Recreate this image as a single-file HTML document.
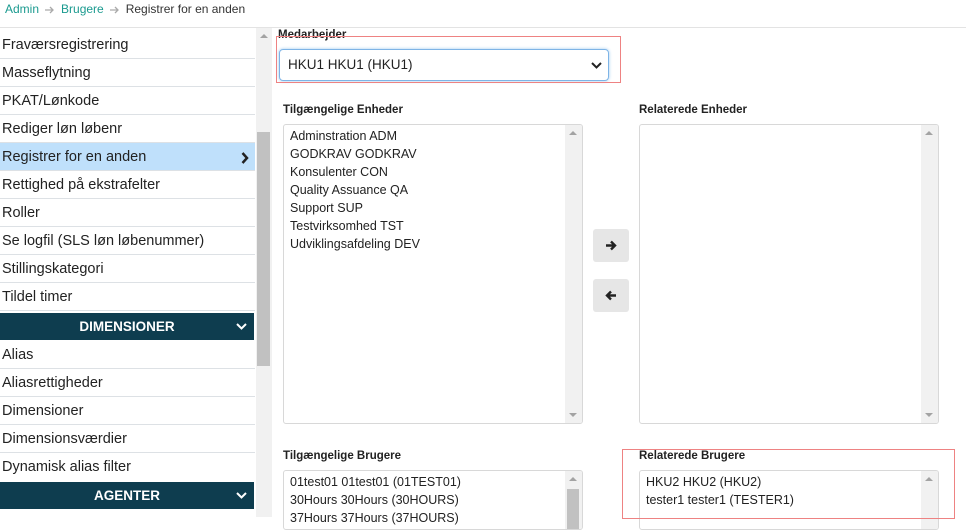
<!DOCTYPE html>
<html><head><style>
*{box-sizing:border-box;margin:0;padding:0}
body{width:966px;height:517px;overflow:hidden;background:#fff;font-family:"Liberation Sans",sans-serif;position:relative;color:#222}
.a{position:absolute}
.bc{top:2px;left:5px;font-size:12px;line-height:14px;color:#333}
.bc .g{color:#1a9a8f}
.bc svg{margin:0 6px;vertical-align:middle}
.row{position:absolute;left:0;width:255px;height:28px;border-bottom:1px solid #dde1e5;font-size:14.5px;line-height:29px;padding-left:2px;color:#222}
.hdr{position:absolute;left:0;width:254px;height:27px;background:#0e3d4f;color:#fff;font-weight:bold;font-size:13.5px;text-align:center;line-height:27px}
.hdr svg{position:absolute;right:7px;top:10px}
.lbl{position:absolute;font-size:11.5px;font-weight:bold;color:#222}
.box{position:absolute;border:1px solid #d8d8d8;border-radius:3px;background:#fff;overflow:hidden;font-size:12.5px;line-height:18px;padding:2px 6px;color:#222}
.sb{position:absolute;right:0;top:0;bottom:0;width:17px;background:#f1f1f1}
.up,.dn{position:absolute;left:4px;width:0;height:0;border-left:4px solid transparent;border-right:4px solid transparent}
.up{top:6px;border-bottom:4px solid #a3a3a3}
.dn{bottom:6px;border-top:4px solid #a3a3a3}
.btn{position:absolute;left:593px;width:36px;height:33px;background:#e6e6e6;border-radius:3px}
.btn svg{position:absolute;left:12px;top:11px}
.red{position:absolute;border:1.5px solid #ee8282}
</style></head><body>
<div class="a bc"><span class="g">Admin</span><svg width="10" height="8" viewBox="0 0 10 8"><path d="M0 4H8M5 1L8 4L5 7" stroke="#aaa" stroke-width="1.3" fill="none"/></svg><span class="g">Brugere</span><svg width="10" height="8" viewBox="0 0 10 8"><path d="M0 4H8M5 1L8 4L5 7" stroke="#aaa" stroke-width="1.3" fill="none"/></svg>Registrer for en anden</div>
<div class="a" style="top:27px;left:0;width:966px;height:1px;background:#e3e3e3"></div>

<div class="row" style="top:31px">Fraværsregistrering</div>
<div class="row" style="top:59px">Masseflytning</div>
<div class="row" style="top:87px">PKAT/Lønkode</div>
<div class="row" style="top:115px">Rediger løn løbenr</div>
<div class="row" style="top:143px;background:#bfe0fb">Registrer for en anden<svg style="position:absolute;right:6px;top:9px" width="8" height="12" viewBox="0 0 8 12"><path d="M1.5 1L6 6L1.5 11" stroke="#222" stroke-width="2.5" fill="none"/></svg></div>
<div class="row" style="top:171px">Rettighed på ekstrafelter</div>
<div class="row" style="top:199px">Roller</div>
<div class="row" style="top:227px">Se logfil (SLS løn løbenummer)</div>
<div class="row" style="top:255px">Stillingskategori</div>
<div class="row" style="top:283px">Tildel timer</div>
<div class="hdr" style="top:313px">DIMENSIONER<svg width="11" height="7" viewBox="0 0 11 7"><path d="M1 1L5.5 5.5L10 1" stroke="#fff" stroke-width="2" fill="none"/></svg></div>
<div class="row" style="top:341px">Alias</div>
<div class="row" style="top:369px">Aliasrettigheder</div>
<div class="row" style="top:397px">Dimensioner</div>
<div class="row" style="top:425px">Dimensionsværdier</div>
<div class="row" style="top:453px;border-bottom:none">Dynamisk alias filter</div>
<div class="hdr" style="top:482px">AGENTER<svg width="11" height="7" viewBox="0 0 11 7"><path d="M1 1L5.5 5.5L10 1" stroke="#fff" stroke-width="2" fill="none"/></svg></div>

<div class="a" style="left:256px;top:28px;width:16px;height:489px;background:#f1f1f1"></div>
<div class="a" style="left:257px;top:132px;width:13px;height:234px;background:#c1c1c1"></div>
<div class="up" style="left:260px;top:34px"></div>

<div class="lbl" style="left:278px;top:29px">Medarbejder</div>
<div class="a" style="left:279px;top:49px;width:330px;height:32px;border:1px solid #7eb4e6;border-radius:4px;box-shadow:0 0 3px #9cc8f0;font-size:13.5px;line-height:30px;padding-left:8px">HKU1 HKU1 (HKU1)<svg style="position:absolute;right:6px;top:12px" width="11" height="7" viewBox="0 0 11 7"><path d="M1 1L5.5 5.5L10 1" stroke="#222" stroke-width="2" fill="none"/></svg></div>
<div class="red" style="left:276px;top:36px;width:345px;height:47px"></div>

<div class="lbl" style="left:283px;top:104px">Tilgængelige Enheder</div>
<div class="box" style="left:283px;top:124px;width:300px;height:300px">Adminstration ADM<br>GODKRAV GODKRAV<br>Konsulenter CON<br>Quality Assuance QA<br>Support SUP<br>Testvirksomhed TST<br>Udviklingsafdeling DEV<div class="sb"><div class="up"></div><div class="dn"></div></div></div>
<div class="lbl" style="left:639px;top:104px">Relaterede Enheder</div>
<div class="box" style="left:639px;top:124px;width:300px;height:300px"><div class="sb"><div class="up"></div><div class="dn"></div></div></div>

<div class="btn" style="top:229px"><svg width="12" height="11" viewBox="0 0 12 11"><path d="M1 5.5H10M6 1.5L10 5.5L6 9.5" stroke="#222" stroke-width="2.4" fill="none"/></svg></div>
<div class="btn" style="top:279px"><svg width="12" height="11" viewBox="0 0 12 11"><path d="M11 5.5H2M6 1.5L2 5.5L6 9.5" stroke="#222" stroke-width="2.4" fill="none"/></svg></div>

<div class="lbl" style="left:283px;top:450px">Tilgængelige Brugere</div>
<div class="box" style="left:283px;top:470px;width:300px;height:60px">01test01 01test01 (01TEST01)<br>30Hours 30Hours (30HOURS)<br>37Hours 37Hours (37HOURS)<div class="sb"><div class="up"></div><div style="position:absolute;left:2px;top:18px;width:12px;height:40px;background:#c1c1c1"></div></div></div>
<div class="lbl" style="left:639px;top:450px">Relaterede Brugere</div>
<div class="box" style="left:639px;top:470px;width:300px;height:60px">HKU2 HKU2 (HKU2)<br>tester1 tester1 (TESTER1)<div class="sb"><div class="up"></div></div></div>
<div class="red" style="left:622px;top:449px;width:333px;height:70px"></div>
</body></html>
